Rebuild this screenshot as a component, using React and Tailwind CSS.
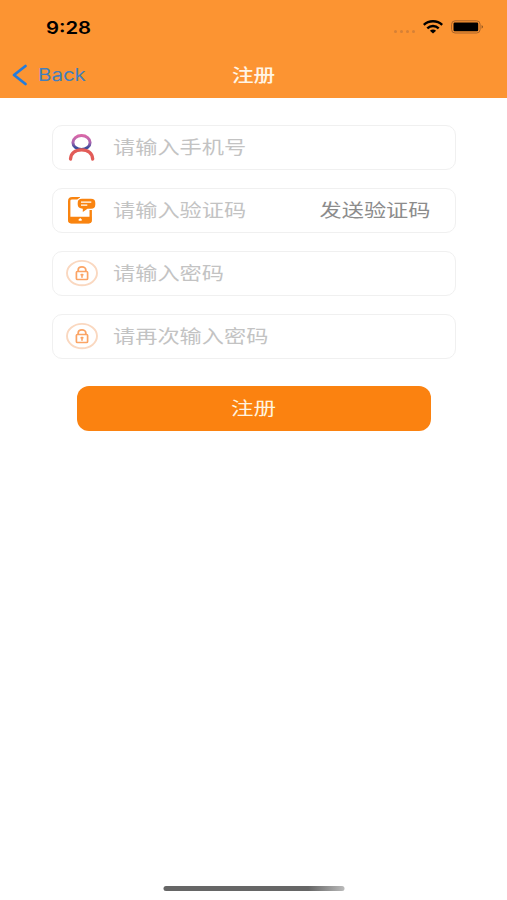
const CJK = "font-['Noto_Sans_CJK_SC',sans-serif]";

function PersonIcon() {
  return (
    <svg width="32" height="32" viewBox="0 0 32 32" fill="none">
      <defs>
        <linearGradient id="head" x1="0" y1="0" x2="0" y2="1">
          <stop offset="0" stopColor="#d968a8" />
          <stop offset="0.5" stopColor="#a865b0" />
          <stop offset="0.85" stopColor="#3f4d9d" />
        </linearGradient>
      </defs>
      <ellipse cx="15.5" cy="11.500" rx="8.600" ry="7" stroke="url(#head)" strokeWidth="3" />
      <path d="M4.500 28C5 22.500 9 18.900 15.600 18.900S26.200 22.500 26.700 28" stroke="#e25c58" strokeWidth="3.300" strokeLinecap="round" />
    </svg>
  );
}

function PhoneIcon() {
  return (
    <svg width="32" height="32" viewBox="0 0 32 32" fill="#f98410">
      <path d="M14 4.200H6.200Q3.200 4.200 3.200 7.200V26Q3.200 28 5.300 28H22.500Q24.700 28 24.700 26V16" fill="none" stroke="#f98410" strokeWidth="2.400" />
      <path fillRule="evenodd" d="M2.500 22.800H25.500V26.800Q25.500 29.500 22.700 29.500H5.300Q2.500 29.500 2.500 26.800ZM14.200 24.100L12.200 26L14.200 27.900L16.200 26Z" />
      <path d="M16 4.800H25Q29.300 4.800 29.300 9V10.400Q29.300 14.700 25 14.700H21.500L16.800 17.900V14.700Q11.700 14.100 11.700 10.400V9Q11.700 4.800 16 4.800Z" stroke="#fff" strokeWidth="2.400" paintOrder="stroke" />
      <path d="M15 8.200H25.300M15 11.200H21.300" stroke="#fff" strokeWidth="1.300" />
    </svg>
  );
}

function LockIcon() {
  return (
    <svg width="32" height="32" viewBox="0 0 32 32" fill="none">
      <ellipse cx="16" cy="16.100" rx="15" ry="12.200" stroke="#fad8c0" strokeWidth="1.900" />
      <rect x="10.400" y="14.500" width="11.200" height="8" rx="1" stroke="#fba465" strokeWidth="1.700" />
      <path d="M12.200 14.500V13C12.200 8.800 19.800 8.800 19.800 13V14.500" stroke="#fba465" strokeWidth="1.800" />
      <path d="M16 16.700V20.800M14.500 17.800H17.500" stroke="#fba465" strokeWidth="1.600" />
    </svg>
  );
}

function Field({ icon, placeholder, action }) {
  return (
    <div className="flex h-[45px] items-center rounded-[10px] border-[1.5px] border-[#f0f0f0] bg-white pb-px pl-[13px] pr-[24px]">
      {icon}
      <span className="ml-[15px] mb-px origin-left scale-x-[1.2] whitespace-nowrap text-[18.5px] leading-[27px] text-[#c3c3c3]">{placeholder}</span>
      {action && (
        <button className="mb-px ml-auto origin-right scale-x-[1.2] whitespace-nowrap text-[18.5px] leading-[27px] text-[#8c8c8c]">{action}</button>
      )}
    </div>
  );
}

export default function App() {
  return (
    <div className={`flex h-[900px] w-[507px] flex-col overflow-hidden bg-white ${CJK}`}>
      <header className="h-[98px] shrink-0 bg-[#fc9432]">
        <div className="flex h-[55px] items-center justify-between pr-[23px] pl-[46px]">
          <span className="mt-px origin-left scale-x-[1.16] font-['Inter',sans-serif] text-[17.5px] font-semibold text-black">9:28</span>
          <div className="mb-px flex items-center">
            <div className="mt-[9px] mr-[8px] flex gap-[3px]">
              <i className="size-[3px] rounded-full bg-[#d68136]" />
              <i className="size-[3px] rounded-full bg-[#d68136]" />
              <i className="size-[3px] rounded-full bg-[#d68136]" />
              <i className="size-[3px] rounded-full bg-[#d68136]" />
            </div>
            <svg width="20" height="14" viewBox="0 0 20 14" fill="none" stroke="#000" strokeWidth="2.400">
              <path d="M.8 4.900C5.800.1 14.200.1 19.200 4.900M4.300 8.300C7.500 5.300 12.500 5.300 15.700 8.300" />
              <path d="M6.900 10.700Q10 8.400 13.100 10.700L10 13.600Z" fill="#000" stroke="none" />
            </svg>
            <svg className="ml-[8px]" width="33" height="14" viewBox="0 0 33 14">
              <rect x=".6" y=".8" width="28.500" height="12.200" rx="3.500" fill="none" stroke="#a9642a" />
              <rect x="2.500" y="2.500" width="24.700" height="8.800" rx="1.200" />
              <path d="M30.700 5Q33 6.800 30.700 8.700Z" fill="#794719" />
            </svg>
          </div>
        </div>
        <div className="grid h-[39px] grid-cols-3 items-center">
          <div className="flex items-center pl-[12px] text-[#247cdc]">
            <svg width="16" height="22" viewBox="0 0 16 22" fill="none" stroke="currentColor" strokeWidth="2.800" strokeLinecap="round" strokeLinejoin="round">
              <path d="M13.500 2L2 11L13.500 20" />
            </svg>
            <span className="ml-[10px] origin-left scale-x-[1.17] font-['Inter',sans-serif] text-[17.5px] leading-[24px] text-[#447fbd]">Back</span>
          </div>
          <h1 className="-mt-[2px] scale-x-[1.2] text-center text-[18px] leading-[26px] font-medium text-[#fff5e6]">注册</h1>
        </div>
      </header>
      <main className="flex flex-col gap-[18px] pt-[27px] pr-[51px] pl-[52px]">
        <Field icon={<PersonIcon />} placeholder="请输入手机号" />
        <Field icon={<PhoneIcon />} placeholder="请输入验证码" action="发送验证码" />
        <Field icon={<LockIcon />} placeholder="请输入密码" />
        <Field icon={<LockIcon />} placeholder="请再次输入密码" />
        <button className="mx-[25px] mt-[9px] flex h-[45px] items-center justify-center rounded-[12px] bg-[#fb8210] pb-[2px] text-[#fff3df]">
          <span className="scale-x-[1.22] text-[18.5px] leading-[27px]">注册</span>
        </button>
      </main>
      <div className="mx-auto mt-auto mb-[9px] h-[5px] w-[181px] translate-x-[0.5px] rounded-full bg-linear-to-r from-[#666] from-80% to-[#bbb]" />
    </div>
  );
}
